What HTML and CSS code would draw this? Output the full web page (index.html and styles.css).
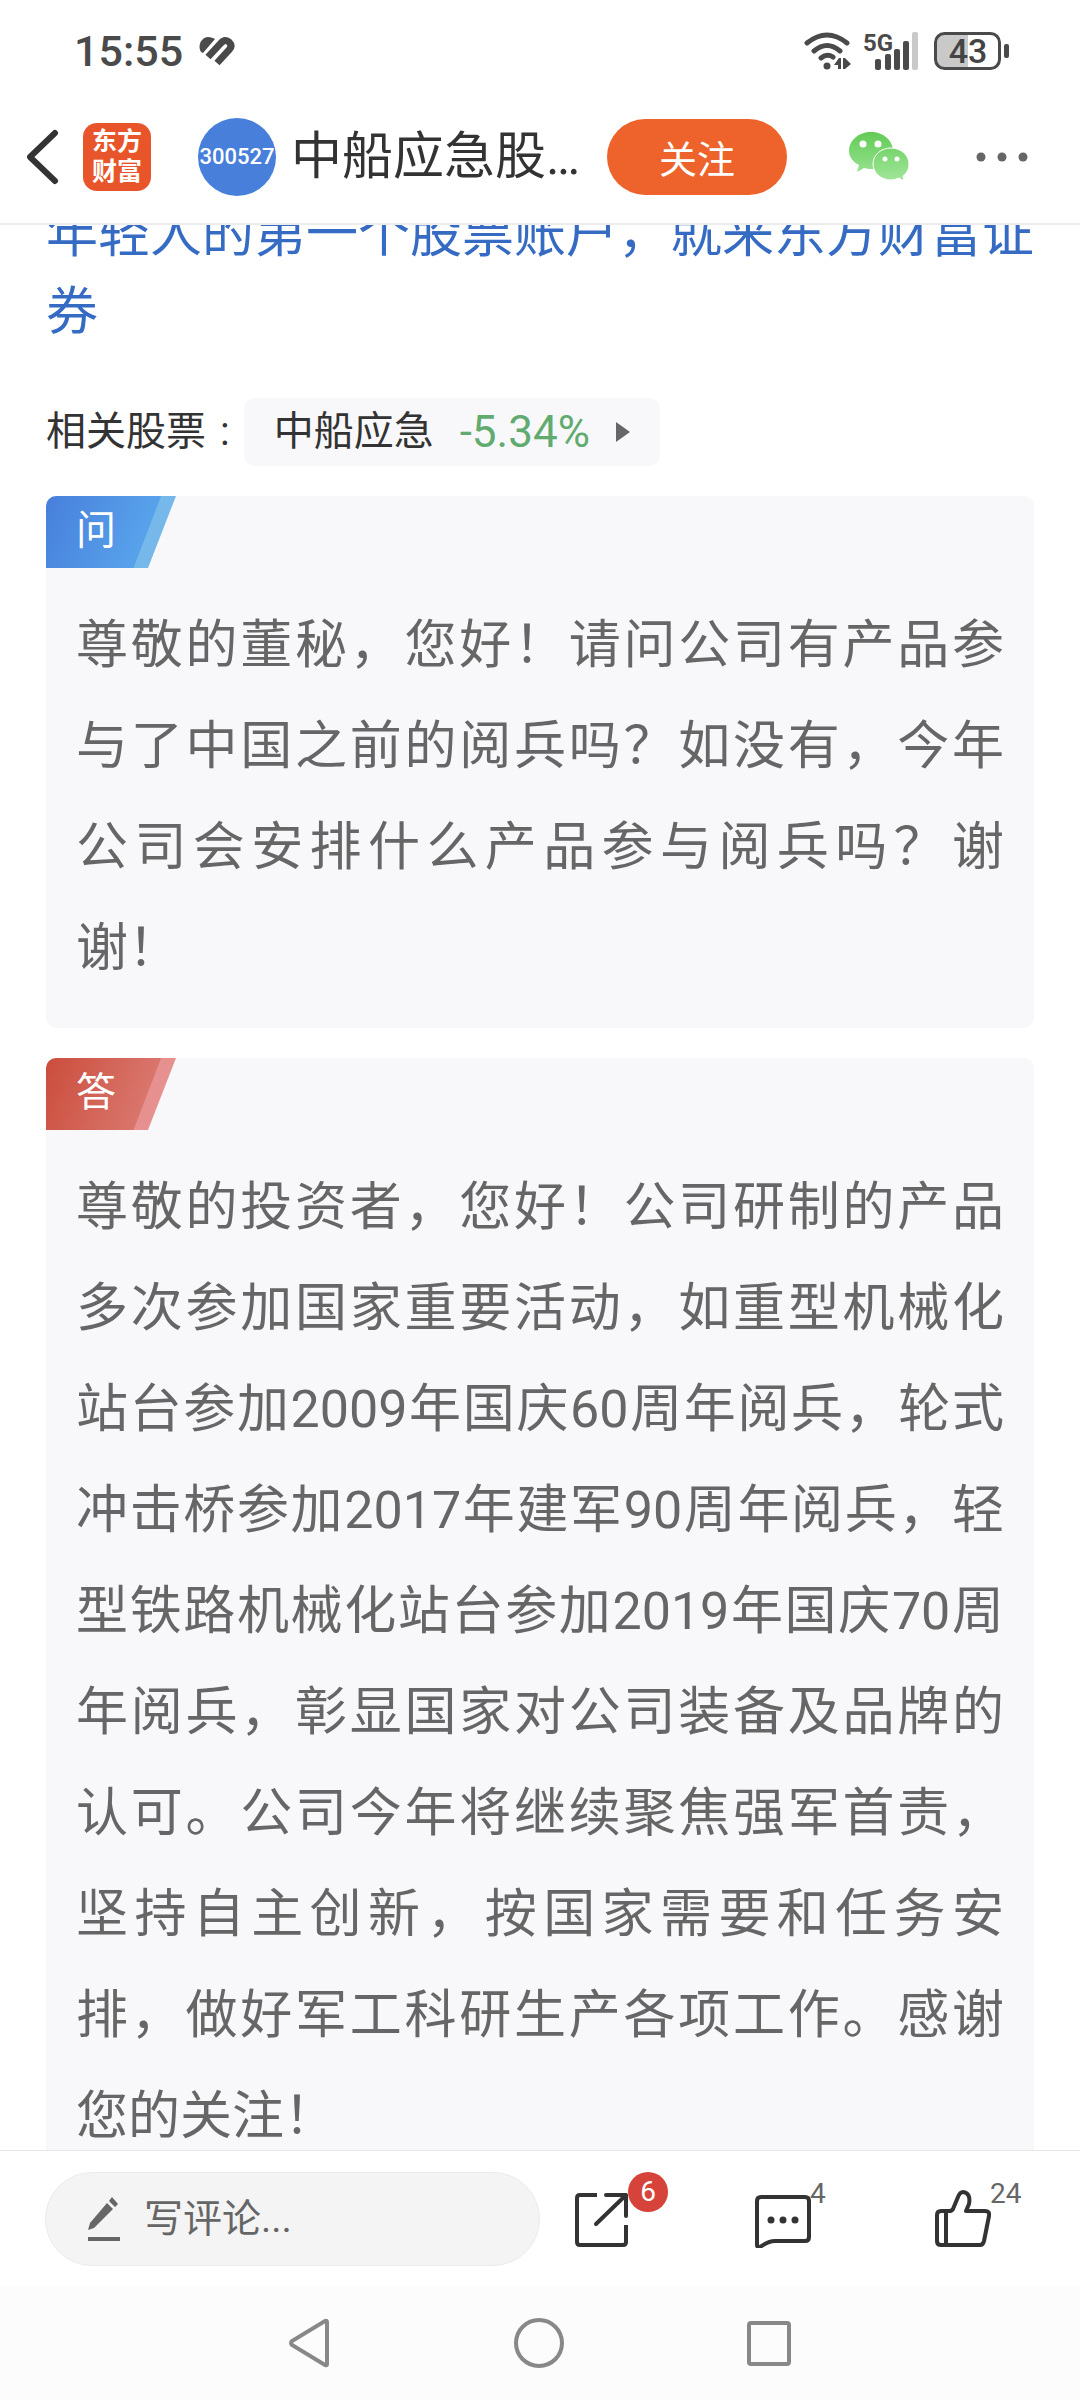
FILE: index.html
```html
<!DOCTYPE html>
<html lang="zh-CN">
<head>
<meta charset="utf-8">
<meta name="viewport" content="width=device-width, initial-scale=1">
<title>中船应急股吧</title>
<link rel="stylesheet" href="styles.css">
</head>
<body>
<div class="app">
  <div class="status">
    <time class="clock">15:55</time>
    <svg class="health" width="36" height="31" viewBox="0 0 36 31">
      <path d="M2 16C-2 9 3 1 9 1c3 0 5 1 7 2L4 17z" fill="#4a4a4a"/>
      <path d="M9 21 21 8Q26 2 30 6T30 14L18 27" fill="none" stroke="#4a4a4a" stroke-width="7"/>
    </svg>
    <div class="indicators">
      <svg class="wifi" width="48" height="38" viewBox="0 0 48 38" fill="none" stroke="#4a4a4a" stroke-width="5" stroke-linecap="round">
        <path d="M3 11Q23-5 43 11M10 19Q23 8 36 19M17 26Q23 21 29 25"/>
        <circle cx="23" cy="34" r="3.5" fill="#4a4a4a" stroke="none"/>
        <path d="M30 33 35 26h2v11h-3v-4zM39 26h2l6 6-6 5h-2z" fill="#4a4a4a" stroke="none"/>
      </svg>
      <svg class="signal" width="60" height="38" viewBox="0 0 60 38">
        <text x="0" y="19" class="signal-label">5G</text>
        <g fill="#4a4a4a">
          <rect x="12" y="27" width="6" height="11" rx="2"/>
          <rect x="22" y="22" width="6" height="16" rx="2"/>
          <rect x="31" y="17" width="6" height="21" rx="2"/>
          <rect x="40" y="9" width="6" height="29" rx="2"/>
        </g>
        <rect x="49" y="0" width="6" height="38" rx="2" fill="#c9c9c9"/>
      </svg>
      <svg class="battery" width="76" height="38" viewBox="0 0 76 38">
        <path d="M10 2H34V36H10Q2 36 2 28V10Q2 2 10 2z" fill="#c9c9c9"/>
        <rect x="1.5" y="1.5" width="64" height="35" rx="9" fill="none" stroke="#4a4a4a" stroke-width="3"/>
        <rect x="70" y="12" width="5" height="14" rx="2" fill="#4a4a4a"/>
        <text x="34" y="31" text-anchor="middle" class="battery-label">43</text>
      </svg>
    </div>
  </div>

  <header class="topbar">
    <button class="icon-btn back" aria-label="返回">
      <svg width="32" height="56" viewBox="0 0 32 56" fill="none" stroke="#333" stroke-width="6" stroke-linecap="round" stroke-linejoin="round"><path d="M28 4 3 28 28 52"/></svg>
    </button>
    <div class="brand"><span>东方</span><span>财富</span></div>
    <div class="avatar">300527</div>
    <h1 class="title">中船应急股…</h1>
    <button class="follow">关注</button>
    <button class="icon-btn wechat" aria-label="分享到微信">
      <svg width="62" height="50" viewBox="0 0 62 50">
        <defs>
          <linearGradient id="wx" x1="0" y1="0" x2="0" y2="50" gradientUnits="userSpaceOnUse"><stop offset="0" stop-color="#62cb55"/><stop offset="1" stop-color="#a3e79c"/></linearGradient>
        </defs>
        <path d="M22 0c12 0 22 8 22 19S34 37 22 37q-4 0-7-1l-7 4 2-7C4 30 0 25 0 19 0 8 10 0 22 0z" fill="url(#wx)"/>
        <path d="M42 16c10 0 18 7 18 16 0 5-2 9-6 12l1 5-5-3q-4 2-8 2c-10 0-18-7-18-16s8-16 18-16z" fill="url(#wx)" stroke="#fff" stroke-width="1"/>
        <g fill="#fff"><circle cx="14" cy="12" r="3.5"/><circle cx="29" cy="12" r="3.5"/><circle cx="36" cy="27" r="2.5"/><circle cx="48" cy="27" r="2.5"/></g>
      </svg>
    </button>
    <button class="icon-btn more" aria-label="更多">
      <svg width="52" height="10" viewBox="0 0 52 10" fill="#666"><circle cx="5" cy="5" r="4.5"/><circle cx="26" cy="5" r="4.5"/><circle cx="47" cy="5" r="4.5"/></svg>
    </button>
  </header>

  <main class="content">
    <div class="scrolled">
      <a class="promo" href="#">年轻人的第一个股票账户，就来东方财富证券</a>
      <div class="related">
        <span class="related-label"><span>相关股票</span><span>:</span></span>
        <a class="stock" href="#">
          <span>中船应急</span><span class="change">-5.34%</span>
          <svg width="14" height="20" viewBox="0 0 14 20" fill="#666"><path d="M0 0 14 10 0 20z"/></svg>
        </a>
      </div>
      <section class="card question">
        <h2 class="tag">问</h2>
        <p class="text">尊敬的董秘，您好！请问公司有产品参与了中国之前的阅兵吗？如没有，今年公司会安排什么产品参与阅兵吗？谢谢！</p>
      </section>
      <section class="card answer">
        <h2 class="tag">答</h2>
        <p class="text">尊敬的投资者，您好！公司研制的产品多次参加国家重要活动，如重型机械化站台参加2009年国庆60周年阅兵，轮式冲击桥参加2017年建军90周年阅兵，轻型铁路机械化站台参加2019年国庆70周年阅兵，彰显国家对公司装备及品牌的认可。公司今年将继续聚焦强军首责，坚持自主创新，按国家需要和任务安排，做好军工科研生产各项工作。感谢您的关注！</p>
      </section>
    </div>
  </main>

  <footer class="toolbar">
    <label class="comment">
      <svg width="32" height="46" viewBox="0 0 32 46" fill="#666"><path d="M0 34 2 27 19 7l6 6L6 32zM21 5l3-4 6 7-3 3zM0 41h32v4H0z"/></svg>
      <input class="comment-input" type="text" placeholder="写评论..." aria-label="写评论">
    </label>
    <div class="actions">
      <button class="action" aria-label="转发 6">
        <svg width="56" height="58" viewBox="0 0 56 58" fill="none" stroke="#333" stroke-width="4" stroke-linejoin="round"><path d="M22 5H5Q2 5 2 8V52Q2 55 5 55H48Q51 55 51 52V35"/><path d="M31 5H51V26M51 5 21 34" stroke-linecap="round"/></svg>
        <span class="badge">6</span>
      </button>
      <button class="action" aria-label="评论 4">
        <svg width="56" height="58" viewBox="0 0 56 58" fill="none" stroke="#333" stroke-width="4" stroke-linejoin="round"><path d="M6 7H50Q54 7 54 11V47Q54 51 50 51H20C11 51 7 57 4 57Q2 57 2 55V11Q2 7 6 7z"/><g fill="#333" stroke="none"><circle cx="16" cy="30" r="3.5"/><circle cx="28" cy="30" r="3.5"/><circle cx="40" cy="30" r="3.5"/></g></svg>
        <span class="count">4</span>
      </button>
      <button class="action" aria-label="点赞 24">
        <svg width="56" height="58" viewBox="0 0 56 58" fill="none" stroke="#333" stroke-width="4" stroke-linejoin="round"><path d="M6 21H14Q17 21 18 19L23 7Q25 2 28 2 36 3 34 14L31 21H50Q55 21 54 26L49 51Q48 55 45 55H6Q2 55 2 51V25Q2 21 6 21zM11 21V55"/></svg>
        <span class="count">24</span>
      </button>
    </div>
  </footer>

  <nav class="sysnav" aria-label="系统导航">
    <button class="icon-btn" aria-label="后退"><svg width="44" height="50" viewBox="0 0 44 50"><path d="M39 4V46Q39 48 37 47L4 27Q2 25 4 23L37 3Q39 2 39 4z"/></svg></button>
    <button class="icon-btn" aria-label="主屏幕"><svg width="50" height="50" viewBox="0 0 50 50"><circle cx="25" cy="25" r="23"/></svg></button>
    <button class="icon-btn" aria-label="最近任务"><svg width="46" height="46" viewBox="0 0 46 46"><rect x="3" y="3" width="40" height="41" rx="2"/></svg></button>
  </nav>
</div>
</body>
</html>
```
FILE: styles.css
```css
* { box-sizing: border-box; }
body {
  margin: 0;
  background: #fff;
  color: #333;
  font-family: Roboto, "Noto Sans CJK SC", sans-serif;
}
button { border: 0; padding: 0; background: none; color: inherit; font: inherit; }
a { color: inherit; text-decoration: none; }
h1, h2, p { margin: 0; font-weight: 400; }
svg { display: block; flex: none; }

.app { display: flex; flex-direction: column; height: 100vh; }

.status {
  display: flex;
  align-items: center;
  flex: none;
  height: 90px;
  padding: 12px 70px 0 74px;
  color: #4a4a4a;
}
.clock { font-size: 43px; font-weight: 500; }
.health { margin-left: 16px; }
.indicators { display: flex; gap: 11px; margin-left: auto; }
.signal { overflow: visible; }
.signal-label { fill: #4a4a4a; font-size: 24px; font-weight: 700; }
.battery-label { fill: #444; font-size: 34px; font-weight: 500; }

.topbar {
  display: flex;
  align-items: center;
  flex: none;
  height: 135px;
  padding: 0 52px 0 27px;
  border-bottom: 2px solid #ececec;
}
.icon-btn { display: grid; place-items: center; flex: none; }
.brand {
  display: grid;
  align-content: center;
  justify-items: center;
  flex: none;
  width: 68px;
  height: 68px;
  margin-left: 24px;
  border-radius: 14px;
  background: #e9552a;
  color: #fff;
  font-size: 25px;
  font-weight: 700;
  line-height: 30px;
}
.avatar {
  display: grid;
  place-items: center;
  flex: none;
  width: 78px;
  height: 78px;
  margin-left: 47px;
  border-radius: 50%;
  background: #477fdb;
  color: #fff;
  font-size: 22px;
  font-weight: 500;
}
.title {
  flex: 1;
  min-width: 0;
  margin-left: 15px;
  overflow: hidden;
  font-size: 51px;
  line-height: 76px;
  white-space: nowrap;
}
.follow {
  flex: none;
  width: 180px;
  height: 76px;
  border-radius: 38px;
  background: #ed632b;
  color: #fff;
  font-size: 38px;
}
.wechat { margin-left: 62px; }
.more { margin-left: 65px; }

.content { flex: 1; min-height: 0; overflow: hidden; padding: 0 46px; }
.scrolled { margin-top: -29px; }
.promo { display: block; color: #366bc4; font-size: 52px; line-height: 78px; }

.related { display: flex; align-items: center; gap: 14px; margin-top: 46px; font-size: 40px; line-height: 68px; }
.related-label { display: flex; gap: 14px; white-space: nowrap; }
.stock {
  display: flex;
  align-items: center;
  padding: 0 30px;
  border-radius: 10px;
  background: #f8f8fa;
}
.change { margin: 0 26px; color: #62ab70; font-size: 44px; }

.card { margin-top: 30px; border-radius: 10px; background: #f8f8fa; overflow: hidden; }
.tag {
  width: 130px;
  height: 72px;
  padding-left: 30px;
  clip-path: polygon(0 0, 100% 0, 102px 100%, 0 100%);
  color: #fff;
  font-size: 40px;
  line-height: 70px;
}
.question .tag { background: linear-gradient(111deg, #477fdb, #58a2eb 107px, #76b8ea 108px); }
.answer .tag { background: linear-gradient(111deg, #cb4d3c, #d9756c 107px, #e6918f 108px); }
.text {
  padding: 27px 30px 29px;
  color: #666;
  font-size: 52px;
  line-height: 101px;
  text-align: justify;
}

.toolbar {
  display: grid;
  grid-template-columns: repeat(2, minmax(0, 1fr));
  align-items: center;
  flex: none;
  height: 136px;
  border-top: 1px solid #e6e6e6;
  background: #fff;
}
.comment {
  display: flex;
  align-items: center;
  gap: 24px;
  height: 94px;
  margin-left: 45px;
  padding: 0 42px;
  border: 1px solid #ebebeb;
  border-radius: 47px;
  background: #f4f4f4;
}
.comment-input {
  flex: 1;
  min-width: 0;
  padding: 0;
  border: 0;
  outline: 0;
  background: none;
  color: #666;
  font: inherit;
  font-size: 39px;
}
.comment-input::placeholder { color: #666; opacity: 1; }
.actions { display: grid; grid-template-columns: repeat(3, minmax(0, 1fr)); }
.action { position: relative; padding-left: 35px; }
.badge {
  position: absolute;
  top: -18px;
  left: 88px;
  width: 40px;
  height: 40px;
  border-radius: 50%;
  background: #d5433b;
  color: #fff;
  font-size: 28px;
  line-height: 40px;
}
.count { position: absolute; top: -12px; left: 90px; color: #666; font-size: 28px; line-height: 32px; }

.sysnav {
  display: flex;
  align-items: center;
  justify-content: center;
  gap: 182px;
  flex: none;
  height: 114px;
  background: #fcfcfc;
}
.sysnav svg { fill: none; stroke: #888; stroke-width: 4px; }
```
